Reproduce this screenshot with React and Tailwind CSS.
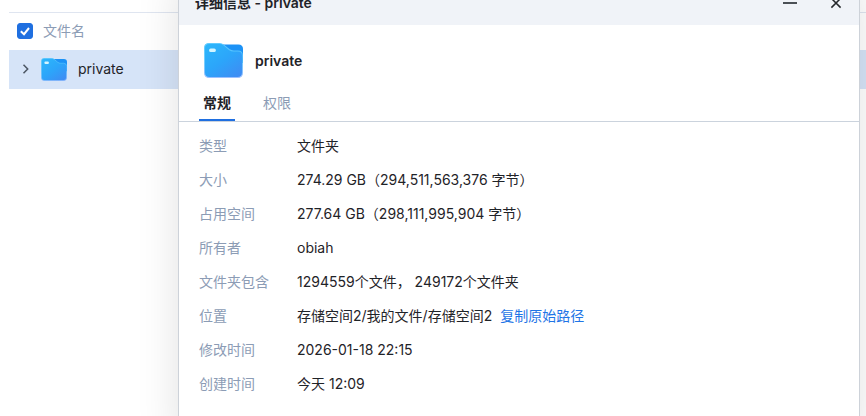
import React, { useState } from 'react';

const details = [
  { label: '类型', value: '文件夹' },
  { label: '大小', value: '274.29 GB（294,511,563,376 字节）' },
  { label: '占用空间', value: '277.64 GB（298,111,995,904 字节）' },
  { label: '所有者', value: 'obiah' },
  { label: '文件夹包含', value: '1294559个文件， 249172个文件夹' },
  { label: '位置', value: '存储空间2/我的文件/存储空间2', action: '复制原始路径' },
  { label: '修改时间', value: '2026-01-18 22:15' },
  { label: '创建时间', value: '今天 12:09' }
];

const tabs = ['常规', '权限'];

const FolderIcon = ({ id, className }) => (
  <svg viewBox="0 0 38 35" preserveAspectRatio="none" className={className} aria-hidden="true">
    <defs>
      <linearGradient id={`${id}-front`} x1="0.1" y1="0" x2="0.9" y2="1">
        <stop offset="0" stopColor="#2cb6fb" />
        <stop offset="0.5" stopColor="#2ca5fa" />
        <stop offset="1" stopColor="#3f8bf3" />
      </linearGradient>
      <linearGradient id={`${id}-edge`} x1="0" y1="0" x2="0" y2="1">
        <stop offset="0" stopColor="#5fcaff" />
        <stop offset="0.5" stopColor="#5fcaff" stopOpacity="0.6" />
        <stop offset="1" stopColor="#9cc0ff" />
      </linearGradient>
    </defs>
    <path d="M14 1.500H33.500Q38 1.500 38 6V20H14Z" fill="#1c92f6" />
    <path
      d="M5 .5H15Q17.500 .5 19.200 2L24.500 6.500Q26.500 8 29 8H33Q37.500 8 37.500 12.500V29.500Q37.500 34.500 32.500 34.500H5.500Q.5 34.500 .5 29.500V5Q.5 .5 5 .5Z"
      fill={`url(#${id}-front)`}
      stroke={`url(#${id}-edge)`}
    />
    <rect x="5" y="5.500" width="6.500" height="3.500" rx="1.500" fill="#d3f5ff" />
  </svg>
);

const FileTable = () => {
  const [checked, setChecked] = useState(true);

  return (
    <div className="pl-[9px] pt-3">
      <table className="w-full border-t border-[#dfe5f0] text-left">
        <thead>
          <tr className="h-[37px]">
            <th className="py-0 pl-2 font-normal text-[#8c9cb5]">
              <label className="flex items-center gap-[10px]">
                <input
                  type="checkbox"
                  checked={checked}
                  onChange={(e) => setChecked(e.target.checked)}
                  className="peer size-4 appearance-none rounded-[3px] border border-[#1f6fe0] checked:bg-[#1f6fe0]"
                />
                <svg
                  viewBox="0 0 16 16"
                  className="pointer-events-none absolute hidden size-4 peer-checked:block"
                  fill="none"
                  stroke="#fff"
                  strokeWidth="2"
                  aria-hidden="true"
                >
                  <path d="M3.800 8.200 7 11.200 12 5" />
                </svg>
                文件名
              </label>
            </th>
          </tr>
        </thead>
        <tbody>
          <tr className="h-[39px] bg-[#d6e4f8]">
            <td className="py-0 pl-3">
              <div className="flex items-center">
                <button aria-label="展开" className="mr-[10px]">
                  <svg viewBox="0 0 10 10" className="size-[10px]" fill="none" stroke="#4b5563" strokeWidth="1.500">
                    <path d="M2.500 .8 6.700 5 2.500 9.200" />
                  </svg>
                </button>
                <FolderIcon id="row-folder" className="h-[23px] w-[26px]" />
                <span className="ml-[11px]">private</span>
              </div>
            </td>
          </tr>
        </tbody>
      </table>
    </div>
  );
};

const DetailsDialog = () => {
  const [active, setActive] = useState('常规');

  return (
    <section
      role="dialog"
      aria-labelledby="dialog-title"
      className="absolute -top-5 left-[178px] right-[6px] border border-[#cdd2d9] bg-white pb-12 shadow-[0_0_40px_rgba(0,0,0,0.12)]"
    >
      <header className="flex h-11 items-center bg-[#f0f3f8] pl-4 pr-4">
        <h2 id="dialog-title" className="flex-1 font-semibold">详细信息 - private</h2>
        <button aria-label="最小化" className="mr-8">
          <svg viewBox="0 0 14 14" className="size-[14px]" stroke="#4b5056" strokeWidth="2">
            <path d="M0 7H14" />
          </svg>
        </button>
        <button aria-label="关闭">
          <svg viewBox="0 0 14 14" className="size-[14px]" stroke="#25282c" strokeWidth="1.500">
            <path d="M2.400 2.400 11.600 11.600M11.600 2.400 2.400 11.600" />
          </svg>
        </button>
      </header>

      <div className="flex items-center gap-3 px-[25px] pt-[18px]">
        <FolderIcon id="dialog-folder" className="h-[35px] w-[39px]" />
        <span className="font-semibold">private</span>
      </div>

      <div role="tablist" className="mt-2 flex gap-6 border-b border-[#cbd3dd] px-5">
        {tabs.map((tab) => (
          <button
            key={tab}
            role="tab"
            aria-selected={active === tab}
            onClick={() => setActive(tab)}
            className={
              active === tab
                ? 'h-[35px] border-b-2 border-[#1f6fe0] px-1 font-semibold'
                : 'h-[35px] border-b-2 border-transparent px-1 text-[#8c9cb5]'
            }
          >
            {tab}
          </button>
        ))}
      </div>

      <dl className="flex flex-col gap-[14px] px-5 pt-[14px]">
        {details.map((item) => (
          <div key={item.label} className="flex">
            <dt className="w-[98px] text-[#8c9cb5]">{item.label}</dt>
            <dd>
              {item.value}
              {item.action && (
                <a href="#copy" className="ml-2 text-[#1f75e6]">{item.action}</a>
              )}
            </dd>
          </div>
        ))}
      </dl>
    </section>
  );
};

const App = () => {
  return (
    <main className="relative h-screen overflow-hidden bg-white font-[Inter,'Noto_Sans_CJK_SC',sans-serif] text-sm text-[#1f2328]">
      <FileTable />
      <DetailsDialog />
    </main>
  );
};

export default App;
